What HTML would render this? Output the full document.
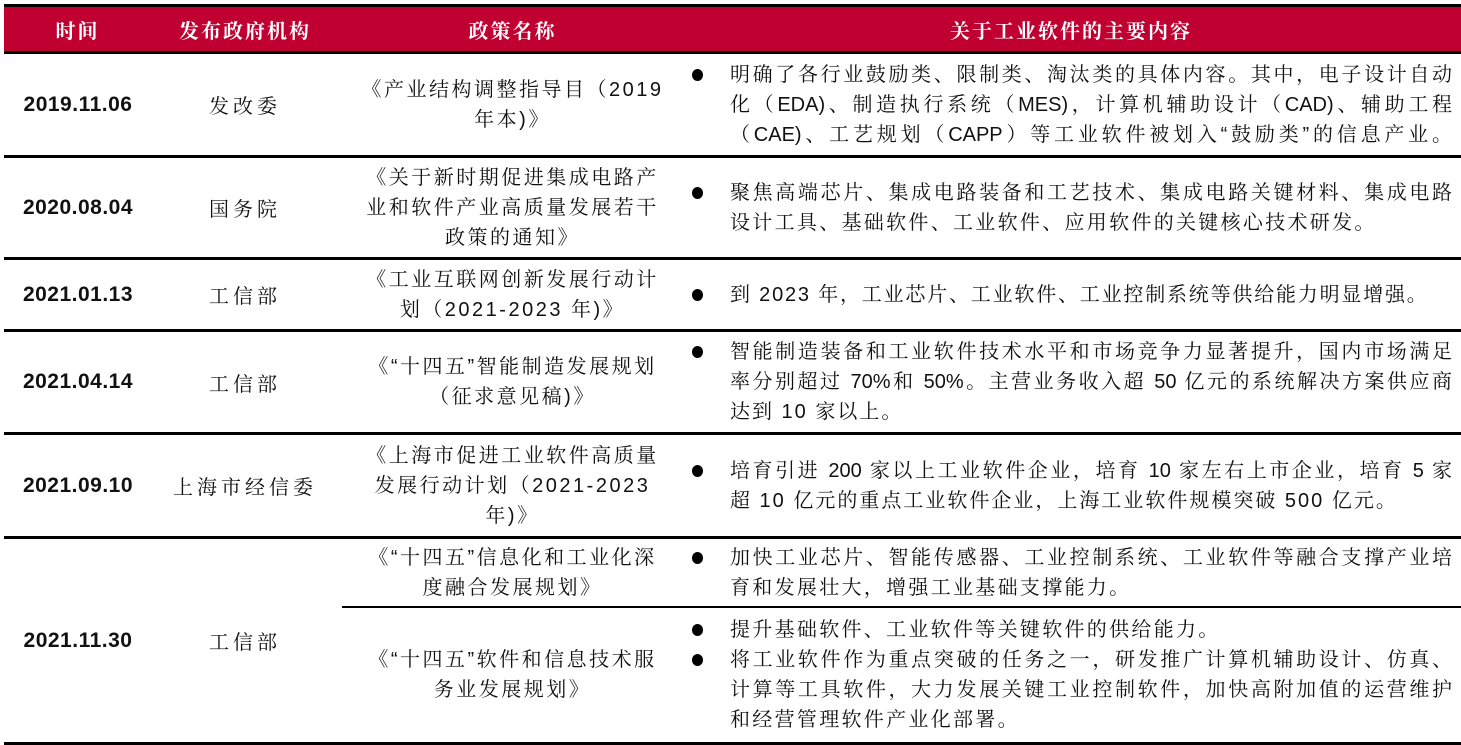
<!DOCTYPE html>
<html><head><meta charset="utf-8"><style>
*{margin:0;padding:0;box-sizing:border-box}
body{width:1461px;height:745px;background:#fff;position:relative;overflow:hidden;font-family:"Liberation Sans","Noto Serif CJK SC",serif;color:#111}
.hl{position:absolute;left:4px;right:0;height:3px;background:#000}
.hdr{position:absolute;left:4px;right:0;top:7px;height:45px;background:#c00030}
.h{position:absolute;top:7px;height:45px;line-height:45px;color:#fff;font-weight:bold;font-size:20px;font-family:"Noto Serif CJK SC",serif;letter-spacing:2px;text-align:center}
.cell{position:absolute;display:flex;flex-direction:column;justify-content:center}
.date{left:0;width:156px;align-items:center;font-weight:bold;font-size:21px;font-family:"Liberation Sans",sans-serif;letter-spacing:.5px}
.ag{left:160px;width:170px;align-items:center;font-size:20px;letter-spacing:4px}
.pol{left:340px;width:345px;font-size:20px;line-height:30px;text-align:center;letter-spacing:2.5px;white-space:nowrap}
.con{left:690px;width:762px;font-size:20px;line-height:30px}
.l{position:relative;padding-left:40px;white-space:nowrap}
.j{text-align:justify;text-align-last:justify}
.b::before{content:"";position:absolute;left:2px;top:9px;width:11px;height:12px;border-radius:50%;background:#000}
</style></head><body>
<div class="hl" style="top:4px"></div>
<div class="hdr"></div>
<div class="hl" style="top:51px"></div>
<div class="h" style="left:0;width:155px">时间</div>
<div class="h" style="left:160px;width:170px">发布政府机构</div>
<div class="h" style="left:340px;width:345px">政策名称</div>
<div class="h" style="left:690px;width:762px">关于工业软件的主要内容</div>

<div class="hl" style="top:155px"></div>
<div class="hl" style="top:257px"></div>
<div class="hl" style="top:329px"></div>
<div class="hl" style="top:432px"></div>
<div class="hl" style="top:536px"></div>
<div class="hl" style="top:742px"></div>
<div style="position:absolute;left:342px;right:0;top:606px;height:2px;background:#000"></div>

<!-- row1 -->
<div class="cell date" style="top:54px;height:101px">2019.11.06</div>
<div class="cell ag" style="top:54px;height:101px">发改委</div>
<div class="cell pol" style="top:54px;height:101px"><div>《产业结构调整指导目（2019</div><div>年本)》</div></div>
<div class="cell con" style="top:54px;height:101px">
<div class="l b j">明确了各行业鼓励类、限制类、淘汰类的具体内容。其中，电子设计自动</div>
<div class="l j">化（EDA)、制造执行系统（MES)，计算机辅助设计（CAD)、辅助工程</div>
<div class="l j">（CAE)、工艺规划（CAPP）等工业软件被划入“鼓励类”的信息产业。</div></div>

<!-- row2 -->
<div class="cell date" style="top:158px;height:99px">2020.08.04</div>
<div class="cell ag" style="top:158px;height:99px">国务院</div>
<div class="cell pol" style="top:158px;height:99px"><div>《关于新时期促进集成电路产</div><div>业和软件产业高质量发展若干</div><div>政策的通知》</div></div>
<div class="cell con" style="top:158px;height:99px">
<div class="l b j">聚焦高端芯片、集成电路装备和工艺技术、集成电路关键材料、集成电路</div>
<div class="l" style="letter-spacing:2.3px">设计工具、基础软件、工业软件、应用软件的关键核心技术研发。</div></div>

<!-- row3 -->
<div class="cell date" style="top:260px;height:69px">2021.01.13</div>
<div class="cell ag" style="top:260px;height:69px">工信部</div>
<div class="cell pol" style="top:260px;height:69px"><div>《工业互联网创新发展行动计</div><div>划（2021-2023 年)》</div></div>
<div class="cell con" style="top:260px;height:69px">
<div class="l b" style="letter-spacing:1.8px">到 2023 年，工业芯片、工业软件、工业控制系统等供给能力明显增强。</div></div>

<!-- row4 -->
<div class="cell date" style="top:332px;height:100px">2021.04.14</div>
<div class="cell ag" style="top:332px;height:100px">工信部</div>
<div class="cell pol" style="top:332px;height:100px"><div>《“十四五”智能制造发展规划</div><div>（征求意见稿)》</div></div>
<div class="cell con" style="top:332px;height:100px">
<div class="l b j">智能制造装备和工业软件技术水平和市场竞争力显著提升，国内市场满足</div>
<div class="l j">率分别超过 70%和 50%。主营业务收入超 50 亿元的系统解决方案供应商</div>
<div class="l" style="letter-spacing:2px">达到 10 家以上。</div></div>

<!-- row5 -->
<div class="cell date" style="top:435px;height:101px">2021.09.10</div>
<div class="cell ag" style="top:435px;height:101px">上海市经信委</div>
<div class="cell pol" style="top:435px;height:101px"><div>《上海市促进工业软件高质量</div><div>发展行动计划（2021-2023</div><div>年)》</div></div>
<div class="cell con" style="top:435px;height:101px">
<div class="l b j">培育引进 200 家以上工业软件企业，培育 10 家左右上市企业，培育 5 家</div>
<div class="l" style="letter-spacing:2px">超 10 亿元的重点工业软件企业，上海工业软件规模突破 500 亿元。</div></div>

<!-- row6 -->
<div class="cell date" style="top:539px;height:203px">2021.11.30</div>
<div class="cell ag" style="top:539px;height:203px">工信部</div>
<div class="cell pol" style="top:539px;height:67px"><div>《“十四五”信息化和工业化深</div><div>度融合发展规划》</div></div>
<div class="cell con" style="top:539px;height:67px">
<div class="l b j">加快工业芯片、智能传感器、工业控制系统、工业软件等融合支撑产业培</div>
<div class="l" style="letter-spacing:2.3px">育和发展壮大，增强工业基础支撑能力。</div></div>
<div class="cell pol" style="top:608px;height:134px"><div>《“十四五”软件和信息技术服</div><div>务业发展规划》</div></div>
<div class="cell con" style="top:608px;height:134px">
<div class="l b" style="letter-spacing:2.3px">提升基础软件、工业软件等关键软件的供给能力。</div>
<div class="l b j">将工业软件作为重点突破的任务之一，研发推广计算机辅助设计、仿真、</div>
<div class="l j">计算等工具软件，大力发展关键工业控制软件，加快高附加值的运营维护</div>
<div class="l" style="letter-spacing:2.3px">和经营管理软件产业化部署。</div></div>
</body></html>
